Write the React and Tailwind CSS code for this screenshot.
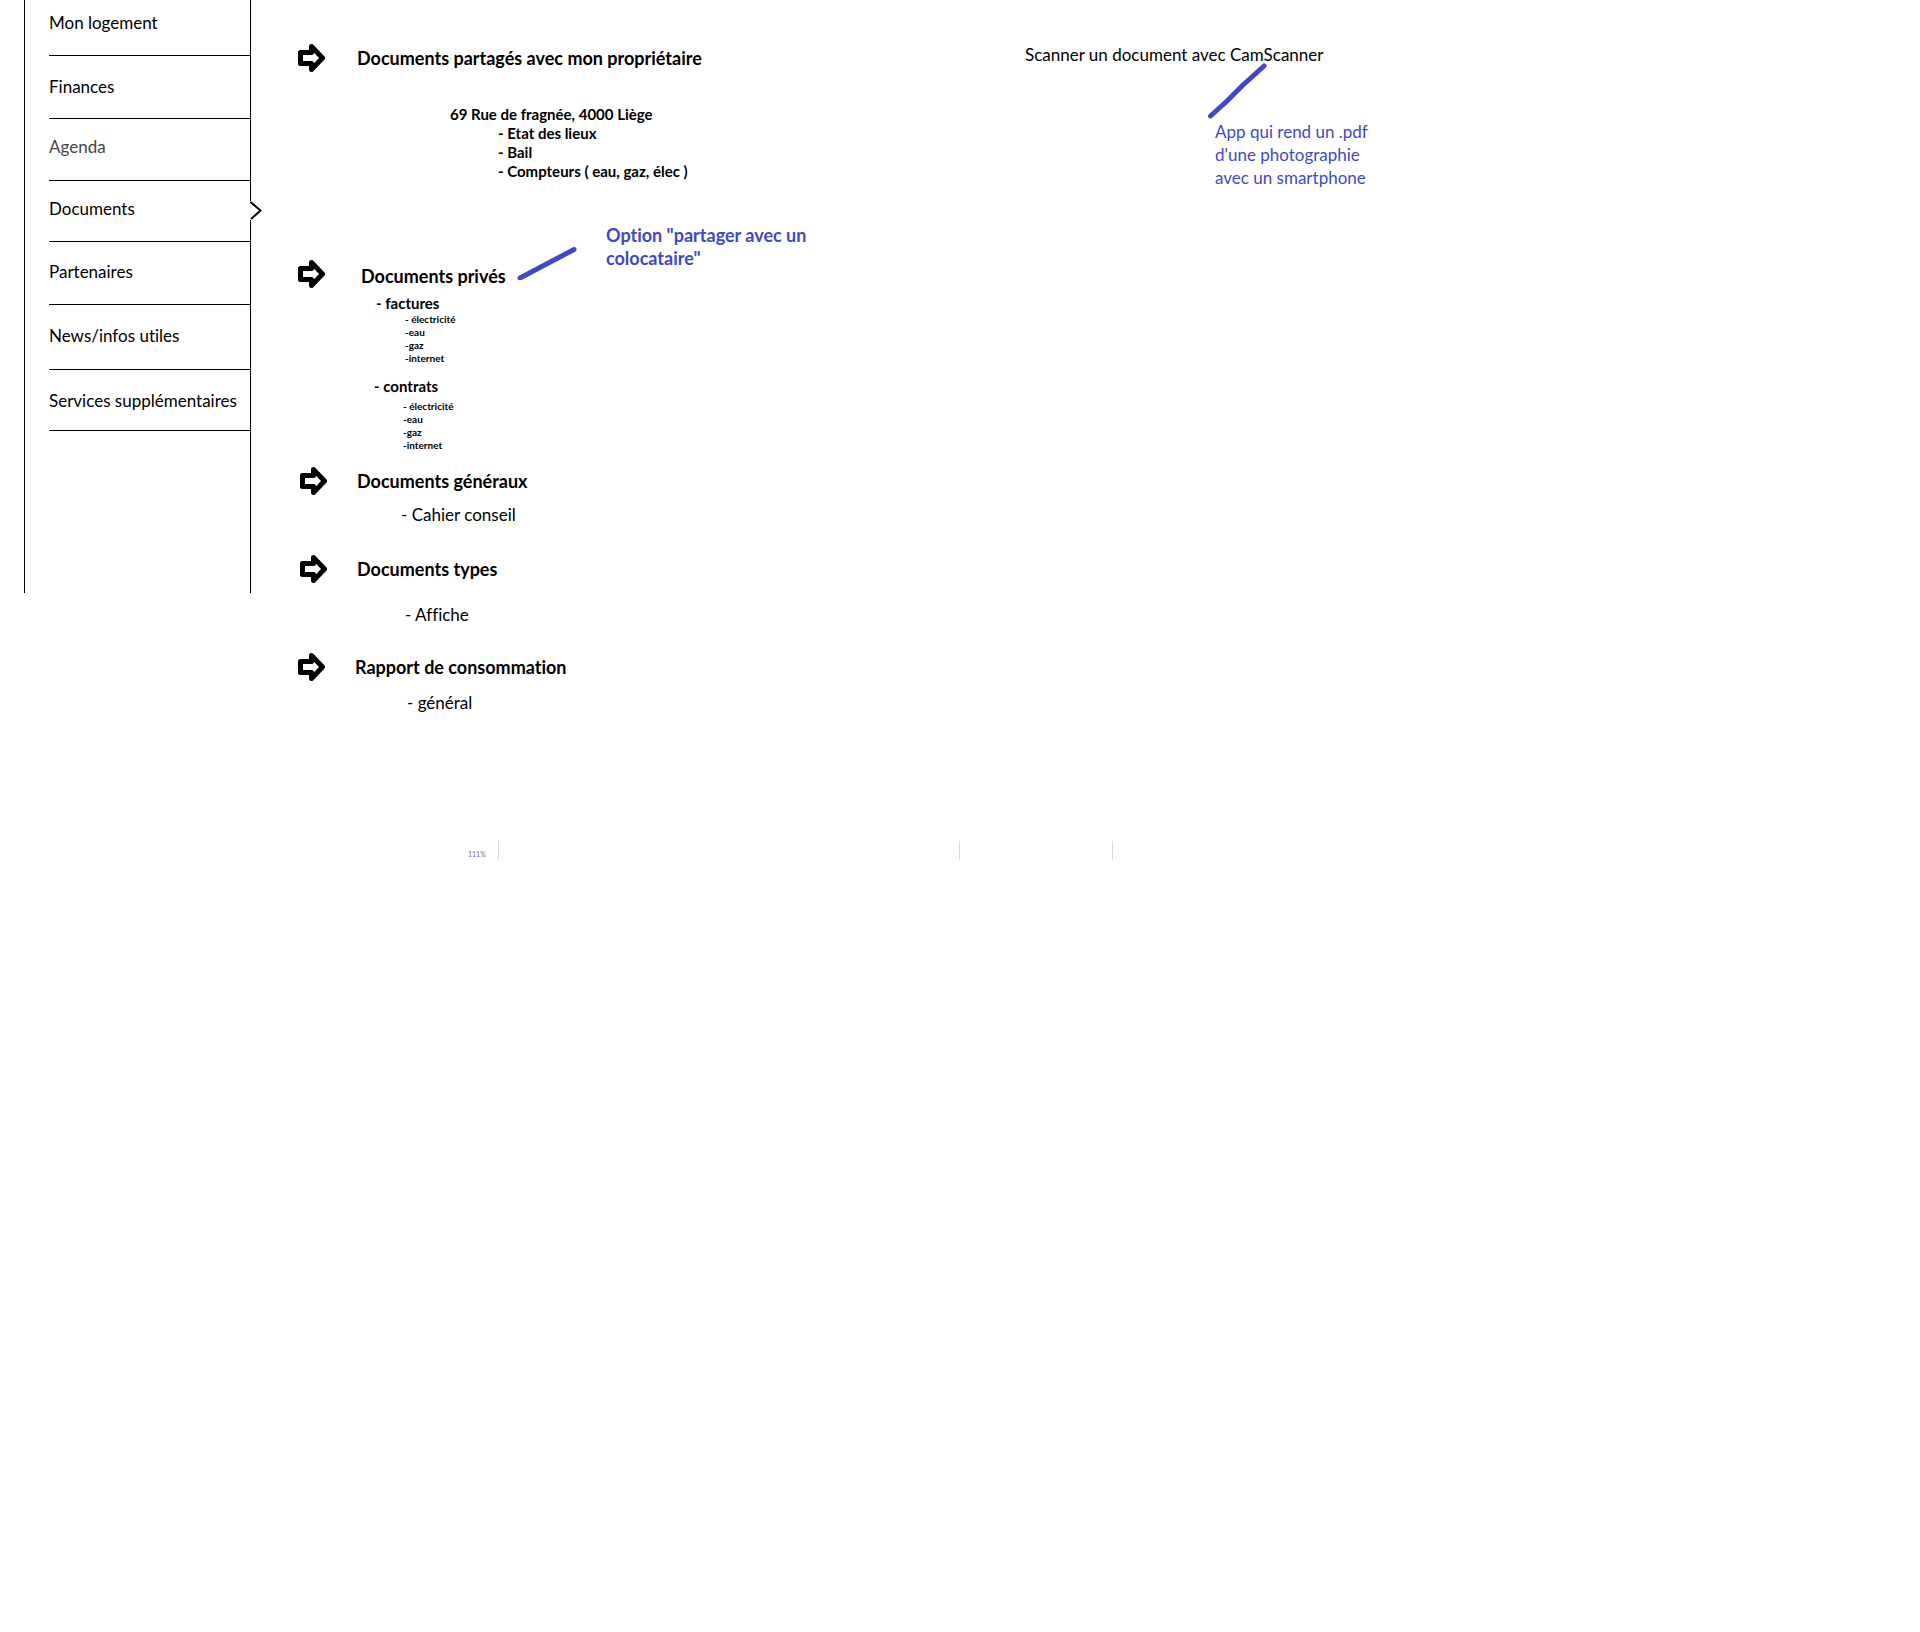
const INK = "#3f48cc";

function Arrow() {
  return (
    <svg className="h-7 w-[27px] shrink-0" viewBox="0 0 27 28" fill="none" aria-hidden="true">
      <path
        d="M2.5 8.5H13.5V2.5L24.5 14L13.5 25.5V19.5H2.5Z"
        stroke="#000"
        strokeWidth="5"
        strokeLinejoin="round"
      />
    </svg>
  );
}

const nav = [
  { label: "Mon logement", cls: "h-14 pt-[11px]" },
  { label: "Finances", cls: "h-[63px] pt-[19px]" },
  { label: "Agenda", cls: "h-[62px] pt-4 text-[#444]" },
  { label: "Documents", cls: "h-[61px] pt-4", active: true },
  { label: "Partenaires", cls: "h-[63px] pt-[18px]" },
  { label: "News/infos utiles", cls: "h-[65px] pt-[19px]" },
  { label: "Services supplémentaires", cls: "h-[61px] pt-[19px]" },
];

function Sidebar() {
  return (
    <nav className="relative ml-6 h-[593px] w-[227px] shrink-0 border-x border-black pl-6 text-[17px] leading-6">
      <ul>
        {nav.map((item) => (
          <li key={item.label} className={"relative border-b border-black whitespace-nowrap " + item.cls}>
            <a href="#">{item.label}</a>
            {item.active && (
              <svg
                className="absolute -right-3 top-5 h-[19px] w-3 bg-white"
                viewBox="0 0 12 19"
                fill="none"
                aria-hidden="true"
              >
                <path d="M0.5 1L10.5 9.5L1 18" stroke="#000" strokeWidth="2" />
              </svg>
            )}
          </li>
        ))}
      </ul>
    </nav>
  );
}

function Heading({ children, className = "gap-8" }) {
  return (
    <div className={"flex items-center " + className}>
      <Arrow />
      <h2 className="text-[18px] leading-6 font-bold whitespace-nowrap">{children}</h2>
    </div>
  );
}

function SubList({ title, className = "", listClass = "" }) {
  return (
    <div className={className}>
      <h3 className="text-[15px] leading-5 font-bold">- {title}</h3>
      <ul className={"pl-[29px] text-[10px] leading-[13px] font-bold " + listClass}>
        <li>- électricité</li>
        <li>-eau</li>
        <li>-gaz</li>
        <li>-internet</li>
      </ul>
    </div>
  );
}

function Sections() {
  return (
    <div className="w-[727px] shrink-0 pt-11 pl-[47px]">
      <section className="h-[216px]">
        <Heading>Documents partagés avec mon propriétaire</Heading>
        <div className="pt-[33px] pl-[152px] text-[15px] leading-[19px] font-bold">
          <p>69 Rue de fragnée, 4000 Liège</p>
          <ul className="pl-12">
            <li>- Etat des lieux</li>
            <li>- Bail</li>
            <li>- Compteurs ( eau, gaz, élec )</li>
          </ul>
        </div>
      </section>

      <section className="relative h-[207px]">
        <div className="flex items-center gap-9">
          <Arrow />
          <h2 className="pt-1 text-[18px] leading-6 font-bold whitespace-nowrap">Documents privés</h2>
        </div>
        <SubList title="factures" className="pt-[5px] pl-[78px]" />
        <SubList title="contrats" className="pt-[11px] pl-[76px]" listClass="pt-1" />
        <svg className="absolute -top-4 left-[219px] h-9 w-[60px]" viewBox="0 0 60 36" fill="none" aria-hidden="true">
          <path d="M3 34L57 5.500" stroke={INK} strokeWidth="5" strokeLinecap="round" />
        </svg>
        <p className="absolute top-[-36px] left-[308px] w-52 text-[18px] leading-[23px] font-bold text-[#3f48cc]">
          Option "partager avec un colocataire"
        </p>
      </section>

      <section className="h-[88px]">
        <Heading className="gap-[30px] pl-0.5">Documents généraux</Heading>
        <p className="pt-2 pl-[103px] text-[17px] leading-6">- Cahier conseil</p>
      </section>

      <section className="h-[98px]">
        <Heading className="gap-[30px] pl-0.5">Documents types</Heading>
        <p className="pt-5 pl-[107px] text-[17px] leading-6">- Affiche</p>
      </section>

      <section className="h-[188px]">
        <Heading className="gap-[30px]">Rapport de consommation</Heading>
        <p className="pt-[10px] pl-[109px] text-[17px] leading-6">- général</p>
      </section>
    </div>
  );
}

function Scanner() {
  return (
    <aside className="relative pt-[43px] pl-[47px] text-[17px] leading-6">
      <p className="whitespace-nowrap">Scanner un document avec CamScanner</p>
      <svg className="absolute top-[62px] left-[229px] h-[58px] w-[60px]" viewBox="0 0 60 58" fill="none" aria-hidden="true">
        <path d="M3.500 54L20 39L36 23L57 4" stroke={INK} strokeWidth="5" strokeLinecap="round" />
      </svg>
      <p className="w-44 pt-[53px] ml-[190px] leading-[23px] text-[#3f48cc]">
        App qui rend un .pdf d'une photographie avec un smartphone
      </p>
    </aside>
  );
}

export default function App() {
  return (
    <div className="min-h-screen bg-white font-['Lato',sans-serif] text-black [font-variant-ligatures:none]">
      <div className="flex items-start">
        <Sidebar />
        <Sections />
        <Scanner />
      </div>
      <footer className="flex h-[19px] items-end pl-[468px] text-[7px] leading-[11px] text-slate-500">
        <span className="w-[30px]">111%</span>
        <span className="h-full w-[461px] border-l border-[#d9d9d9]" />
        <span className="h-full w-[153px] border-l border-[#d9d9d9]" />
        <span className="h-full border-l border-[#d9d9d9]" />
      </footer>
    </div>
  );
}
